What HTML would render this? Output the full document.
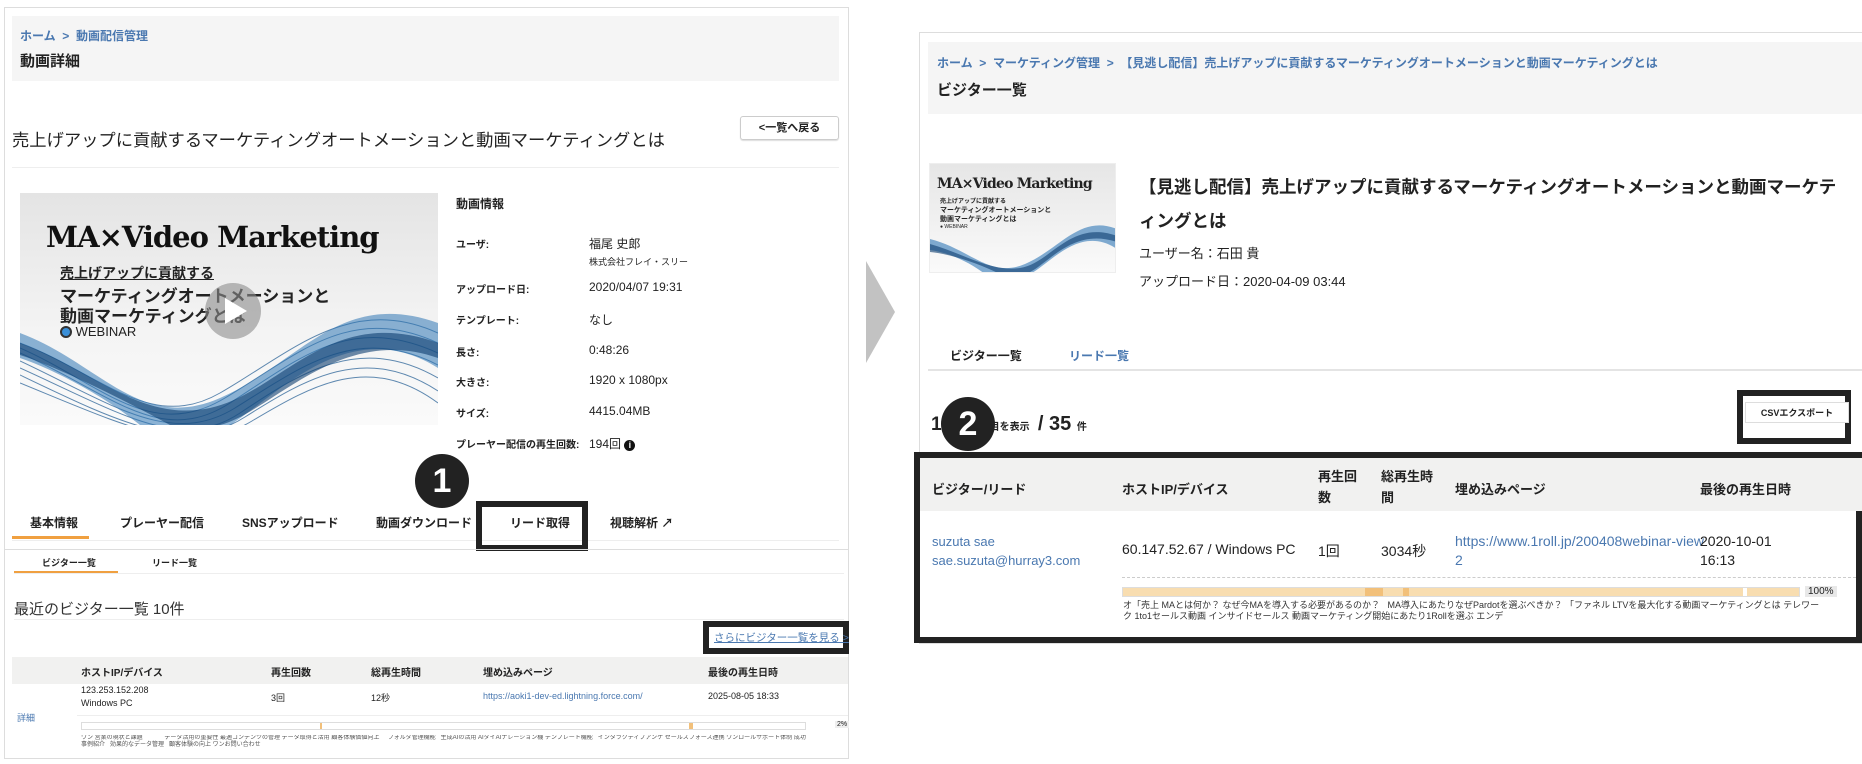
<!DOCTYPE html>
<html><head><meta charset="utf-8">
<style>
*{margin:0;padding:0;box-sizing:border-box}
body{width:1862px;height:764px;background:#fff;position:relative;overflow:hidden;font-family:"Liberation Sans","Noto Sans CJK JP",sans-serif;color:#222}
.a{position:absolute;white-space:nowrap}
.b{font-weight:bold}
.blue{color:#4a78b0}
.bx{position:absolute;border:6px solid #222}
.circ{position:absolute;width:54px;height:54px;border-radius:50%;background:#222;color:#fff;font-size:34px;font-weight:bold;text-align:center;line-height:54px}
.tl{font-size:9px;color:#333;line-height:11px;position:absolute;white-space:normal;overflow:hidden}
</style></head><body>

<!-- LEFT PANEL -->
<div class="a" style="left:4px;top:7px;width:845px;height:752px;border:1px solid #ddd"></div>
<div class="a" style="left:12px;top:16px;width:827px;height:65px;background:#f5f5f5"></div>
<div class="a b blue" style="left:20px;top:27px;font-size:12px">ホーム &nbsp;&gt;&nbsp; 動画配信管理</div>
<div class="a b" style="left:20px;top:50px;font-size:15px">動画詳細</div>
<div class="a" style="left:12px;top:126px;font-size:17.3px">売上げアップに貢献するマーケティングオートメーションと動画マーケティングとは</div>
<div class="a b" style="left:740px;top:116px;width:99px;height:24px;border:1px solid #ccc;border-radius:3px;font-size:11px;text-align:center;line-height:22px;box-shadow:0 1px 1px #ddd">&lt;一覧へ戻る</div>
<div class="a" style="left:12px;top:167px;width:827px;height:1px;background:#eee"></div>

<!-- thumbnail -->
<div class="a" style="left:20px;top:193px;width:418px;height:232px;background:linear-gradient(180deg,#e4e4e4,#f4f4f4 60%,#fafafa);overflow:hidden">
<svg width="418" height="232" style="position:absolute;left:0;top:0">
<g fill="none" stroke="#1e5a92" stroke-width="1" opacity=".7">
<path d="M0 150 C80 180 130 240 200 200 S330 100 418 140"/>
<path d="M0 155 C80 190 130 250 205 205 S330 110 418 150"/>
<path d="M0 160 C90 200 140 255 210 210 S330 120 418 160"/>
<path d="M0 168 C90 210 150 255 215 215 S335 130 418 172"/>
<path d="M0 175 C100 220 160 260 220 220 S340 140 418 185"/>
<path d="M0 182 C100 230 165 262 225 224 S345 150 418 198"/>
<path d="M0 190 C110 235 170 265 232 228 S350 160 418 210"/>
</g>
<path d="M0 140 C80 170 120 240 200 205 S320 95 418 130 L418 175 C330 120 260 200 210 232 L120 232 C80 200 30 175 0 165Z" fill="#2f77b5" opacity=".55"/>
<path d="M0 150 C70 175 120 230 190 215 S310 110 418 150 L418 165 C320 130 250 220 200 232 L150 232 C100 205 40 175 0 162Z" fill="#0e3e70" opacity=".6"/>
</svg>
<div class="a" style="left:26px;top:27px;font-family:'DejaVu Serif','Liberation Serif',serif;font-weight:bold;font-size:29px;letter-spacing:-1px;color:#111">MA×Video Marketing</div>
<div class="a b" style="left:40px;top:70px;font-size:14px;text-decoration:underline">売上げアップに貢献する</div>
<div class="a b" style="left:40px;top:89px;font-size:17px">マーケティングオートメーションと</div>
<div class="a b" style="left:40px;top:109px;font-size:17px">動画マーケティングとは</div>
<div class="a" style="left:40px;top:131px;font-size:13px;color:#222"><span style="display:inline-block;width:12px;height:12px;border-radius:50%;background:#3a8fd8;border:2px solid #333;vertical-align:-2px"></span> WEBINAR</div>
<div class="a" style="left:185px;top:90px;width:56px;height:56px;border-radius:50%;background:rgba(140,140,140,.6)"></div>
<div class="a" style="left:205px;top:105px;width:0;height:0;border-left:22px solid #fff;border-top:13px solid transparent;border-bottom:13px solid transparent"></div>
</div>

<!-- info -->
<div class="a b" style="left:456px;top:195px;font-size:12px">動画情報</div>
<div class="a b" style="left:456px;top:236px;font-size:10px">ユーザ:</div>
<div class="a" style="left:589px;top:235px;font-size:12px">福尾 史郎</div>
<div class="a" style="left:589px;top:255px;font-size:9px">株式会社フレイ・スリー</div>
<div class="a b" style="left:456px;top:281px;font-size:10px">アップロード日:</div>
<div class="a" style="left:589px;top:280px;font-size:12px">2020/04/07 19:31</div>
<div class="a b" style="left:456px;top:312px;font-size:10px">テンプレート:</div>
<div class="a" style="left:589px;top:311px;font-size:12px">なし</div>
<div class="a b" style="left:456px;top:344px;font-size:10px">長さ:</div>
<div class="a" style="left:589px;top:343px;font-size:12px">0:48:26</div>
<div class="a b" style="left:456px;top:374px;font-size:10px">大きさ:</div>
<div class="a" style="left:589px;top:373px;font-size:12px">1920 x 1080px</div>
<div class="a b" style="left:456px;top:405px;font-size:10px">サイズ:</div>
<div class="a" style="left:589px;top:404px;font-size:12px">4415.04MB</div>
<div class="a b" style="left:456px;top:436px;font-size:10px">プレーヤー配信の再生回数:</div>
<div class="a" style="left:589px;top:435px;font-size:12px">194回 <span style="display:inline-block;width:11px;height:11px;border-radius:50%;background:#111;color:#fff;font-size:9px;text-align:center;line-height:11px;font-weight:bold;vertical-align:0">i</span></div>

<div class="circ" style="left:415px;top:454px">1</div>

<!-- tabs -->
<div class="a b" style="left:30px;top:514px;font-size:12px">基本情報</div>
<div class="a" style="left:12px;top:536px;width:77px;height:3px;background:#f0a040"></div>
<div class="a b" style="left:120px;top:514px;font-size:12px">プレーヤー配信</div>
<div class="a b" style="left:242px;top:514px;font-size:12px">SNSアップロード</div>
<div class="a b" style="left:376px;top:514px;font-size:12px">動画ダウンロード</div>
<div class="a b" style="left:510px;top:514px;font-size:12px">リード取得</div>
<div class="a b" style="left:610px;top:514px;font-size:12px">視聴解析 ↗</div>
<div class="a" style="left:12px;top:540px;width:827px;height:1px;background:#eee"></div>
<div class="bx" style="left:476px;top:501px;width:112px;height:50px"></div>
<div class="a" style="left:4px;top:549px;width:845px;height:1px;background:#ddd"></div>

<div class="a b" style="left:42px;top:556px;font-size:9px">ビジター一覧</div>
<div class="a b" style="left:152px;top:556px;font-size:9px">リード一覧</div>
<div class="a" style="left:14px;top:571px;width:104px;height:2px;background:#f0a040"></div>
<div class="a" style="left:14px;top:573px;width:830px;height:1px;background:#eee"></div>

<div class="a" style="left:14px;top:598px;font-size:15px;color:#333">最近のビジター一覧 10件</div>
<div class="a" style="left:14px;top:619px;width:830px;height:1px;background:#eee"></div>
<div class="bx" style="left:703px;top:621px;width:146px;height:33px"></div>
<div class="a blue" style="left:714px;top:630px;font-size:10.5px;text-decoration:underline">さらにビジター一覧を見る &gt;</div>

<div class="a" style="left:12px;top:657px;width:836px;height:27px;background:#f1f1f0"></div>
<div class="a b" style="left:81px;top:664px;font-size:10px">ホストIP/デバイス</div>
<div class="a b" style="left:271px;top:664px;font-size:10px">再生回数</div>
<div class="a b" style="left:371px;top:664px;font-size:10px">総再生時間</div>
<div class="a b" style="left:483px;top:664px;font-size:10px">埋め込みページ</div>
<div class="a b" style="left:708px;top:664px;font-size:10px">最後の再生日時</div>
<div class="a" style="left:81px;top:685px;font-size:9px">123.253.152.208</div>
<div class="a" style="left:81px;top:698px;font-size:9px">Windows PC</div>
<div class="a" style="left:271px;top:691px;font-size:9px">3回</div>
<div class="a" style="left:371px;top:691px;font-size:9px">12秒</div>
<div class="a blue" style="left:483px;top:691px;font-size:9px">https://aoki1-dev-ed.lightning.force.com/</div>
<div class="a" style="left:708px;top:691px;font-size:9px">2025-08-05 18:33</div>
<div class="a blue" style="left:17px;top:711px;font-size:9px">詳細</div>
<div class="a" style="left:77px;top:715px;width:771px;height:1px;background:#eee"></div>
<div class="a" style="left:81px;top:722px;width:725px;height:8px;border:1px solid #ddd;background:#fff"></div>
<div class="a" style="left:320px;top:723px;width:2px;height:6px;background:#f2c07a"></div>
<div class="a" style="left:689px;top:723px;width:4px;height:6px;background:#f2c07a"></div>
<div class="a" style="left:835px;top:721px;font-size:7px;background:#eee;padding:0 2px">2%</div>
<div class="tl" style="left:81px;top:735px;width:725px;height:24px;font-size:6px;line-height:7px;color:#555">ワン 営業の現状と課題 &nbsp; &nbsp; &nbsp; &nbsp; &nbsp; &nbsp; データ活用の重要性 最適コンテンツの管理 データ取得と活用 顧客体験価値向上 &nbsp; &nbsp; フォルダ管理機能 &nbsp; 生成AIの活用 AIダイAIナレーション機 テンプレート機能 &nbsp; インタラクティブアンケ セールスフォース連携 ワンロールサポート体制 成功事例紹介 &nbsp; 効果的なデータ管理 &nbsp; 顧客体験の向上 ワンお問い合わせ</div>

<!-- ARROW -->
<svg class="a" style="left:860px;top:255px" width="40" height="115"><polygon points="6,6 6,108 35,57" fill="#c2c2c2"/></svg>

<!-- RIGHT PANEL -->
<div class="a" style="left:919px;top:32px;width:950px;height:612px;border:1px solid #ddd"></div>
<div class="a" style="left:928px;top:42px;width:934px;height:72px;background:#f5f5f5"></div>
<div class="a b blue" style="left:937px;top:54px;font-size:12px">ホーム &nbsp;&gt;&nbsp; マーケティング管理 &nbsp;&gt;&nbsp; 【見逃し配信】売上げアップに貢献するマーケティングオートメーションと動画マーケティングとは</div>
<div class="a b" style="left:937px;top:79px;font-size:15px">ビジター一覧</div>

<div class="a" style="left:929px;top:163px;width:187px;height:110px;background:linear-gradient(180deg,#e6e6e6,#fafafa);overflow:hidden;border:1px solid #eee">
<svg width="187" height="110" style="position:absolute;left:0;top:0">
<path d="M0 75 C40 85 60 115 95 100 S150 50 187 65 L187 85 C150 60 120 100 100 110 L55 110 C35 95 15 88 0 86Z" fill="#2f77b5" opacity=".6"/>
<path d="M0 80 C35 90 60 108 90 104 S140 55 187 72 L187 78 C140 62 115 105 95 110 L70 110 C45 98 20 90 0 88Z" fill="#0e3e70" opacity=".6"/>
</svg>
<div class="a" style="left:7px;top:12px;font-family:'DejaVu Serif',serif;font-weight:bold;font-size:14px;letter-spacing:-.8px">MA×Video Marketing</div>
<div class="a b" style="left:10px;top:32px;font-size:6px">売上げアップに貢献する</div>
<div class="a b" style="left:10px;top:41px;font-size:7px">マーケティングオートメーションと</div>
<div class="a b" style="left:10px;top:50px;font-size:7px">動画マーケティングとは</div>
<div class="a" style="left:10px;top:60px;font-size:5px">● WEBINAR</div>
</div>

<div class="a b" style="left:1139px;top:170px;font-size:17.5px;line-height:34px;white-space:normal;width:700px">【見逃し配信】売上げアップに貢献するマーケティングオートメーションと動画マーケテ<br>ィングとは</div>
<div class="a" style="left:1139px;top:243px;font-size:13px">ユーザー名：石田 貴</div>
<div class="a" style="left:1139px;top:271px;font-size:13px">アップロード日：2020-04-09 03:44</div>

<div class="a b" style="left:950px;top:347px;font-size:12px">ビジター一覧</div>
<div class="a b blue" style="left:1069px;top:347px;font-size:12px">リード一覧</div>
<div class="a" style="left:928px;top:369px;width:934px;height:2px;background:#e4e4e4"></div>

<div class="a b" style="left:931px;top:413px;font-size:10px"><span style="font-size:19px">1 - 10</span>件目を表示 <span style="font-size:20px">&nbsp;/ 35 </span>件</div>
<div class="circ" style="left:941px;top:397px">2</div>

<div class="bx" style="left:1737px;top:390px;width:114px;height:54px"></div>
<div class="a b" style="left:1745px;top:402px;width:104px;height:21px;border:1px solid #ddd;background:#fff;font-size:9px;text-align:center;line-height:20px">CSVエクスポート</div>

<div class="bx" style="left:914px;top:452px;width:948px;height:191px"></div>
<div class="a" style="left:920px;top:458px;width:942px;height:53px;background:#f1f1f0"></div>
<div class="a b" style="left:932px;top:479px;font-size:13px">ビジター/リード</div>
<div class="a b" style="left:1122px;top:479px;font-size:13px">ホストIP/デバイス</div>
<div class="a b" style="left:1318px;top:466px;font-size:13px;line-height:21px">再生回<br>数</div>
<div class="a b" style="left:1381px;top:466px;font-size:13px;line-height:21px">総再生時<br>間</div>
<div class="a b" style="left:1455px;top:479px;font-size:13px">埋め込みページ</div>
<div class="a b" style="left:1700px;top:479px;font-size:13px">最後の再生日時</div>

<div class="a blue" style="left:932px;top:532px;font-size:13px;line-height:19px">suzuta sae<br>sae.suzuta@hurray3.com</div>
<div class="a" style="left:1122px;top:541px;font-size:14px">60.147.52.67 / Windows PC</div>
<div class="a" style="left:1318px;top:541px;font-size:14px">1回</div>
<div class="a" style="left:1381px;top:541px;font-size:14px">3034秒</div>
<div class="a blue" style="left:1455px;top:532px;font-size:14px;line-height:19px">https://www.1roll.jp/200408webinar-view<br>2</div>
<div class="a" style="left:1700px;top:532px;font-size:14px;line-height:19px">2020-10-01<br>16:13</div>
<div class="a" style="left:1122px;top:577px;width:734px;border-top:1px dashed #ccc"></div>
<div class="a" style="left:1122px;top:587px;width:678px;height:10px;background:#f8ddb0;border:1px solid #ddd"></div>
<div class="a" style="left:1365px;top:588px;width:18px;height:8px;background:#f2c07a"></div>
<div class="a" style="left:1403px;top:588px;width:6px;height:8px;background:#f2c07a"></div>
<div class="a" style="left:1743px;top:588px;width:4px;height:8px;background:#fff"></div>
<div class="a" style="left:1805px;top:586px;font-size:10px;background:#e8e8e8;padding:0 3px">100%</div>
<div class="tl" style="left:1123px;top:600px;width:700px;height:28px">オ「売上 MAとは何か？ なぜ今MAを導入する必要があるのか？ &nbsp; MA導入にあたりなぜPardotを選ぶべきか？ 「ファネル LTVを最大化する動画マーケティングとは テレワーク 1to1セールス動画 インサイドセールス 動画マーケティング開始にあたり1Rollを選ぶ エンデ</div>

</body></html>
